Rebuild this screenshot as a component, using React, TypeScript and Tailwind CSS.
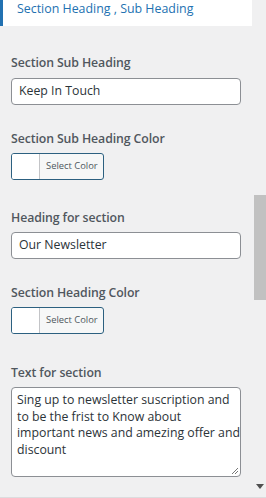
import React from 'react';

const font = { fontFamily: '"Open Sans", "Noto Sans", sans-serif' };

function Label({ children }: { children: React.ReactNode }) {
  return <div className="text-[12.3px] font-semibold leading-4 tracking-[-0.1px] text-[#50575e]">{children}</div>;
}

function TextInput({ value }: { value: string }) {
  return (
    <div className="flex h-[27px] w-[230px] items-center rounded-[4px] border border-[#8c8f94] bg-white px-[7px] text-[12.3px] text-[#2c3338]">
      {value}
    </div>
  );
}

function ColorButton() {
  return (
    <div className="flex h-[27px] w-[93px] overflow-hidden rounded-[3px] border border-[#2c6080] bg-[#f6f7f7]">
      <div className="w-[28px] border-r border-[#c3c4c7] bg-white" />
      <div className="flex flex-1 items-center pl-[6px] text-[9.4px] text-[#50575e]">Select Color</div>
    </div>
  );
}

const lines = [
  'Sing up to newsletter suscription and',
  'to be the frist to Know about',
  'important news and amezing offer and',
  'discount',
];

export default function App() {
  return (
    <div className="relative h-[498px] w-[266px] overflow-hidden bg-[#f0f0f1]" style={font}>
      <div className="flex h-[26px] w-[252px] items-end border-l-[3px] border-[#2271b1] bg-white pb-[9px] pl-[14px]">
        <span className="text-[12.4px] leading-4 text-[#2271b1]">Section Heading , Sub Heading</span>
      </div>

      <div className="flex flex-col pl-[11px] pt-[29px]">
        <Label>Section Sub Heading</Label>
        <div className="mt-[7px]">
          <TextInput value="Keep In Touch" />
        </div>

        <div className="mt-[26px]">
          <Label>Section Sub Heading Color</Label>
        </div>
        <div className="mt-[6px]">
          <ColorButton />
        </div>

        <div className="mt-[30px]">
          <Label>Heading for section</Label>
        </div>
        <div className="mt-[6px]">
          <TextInput value="Our Newsletter" />
        </div>

        <div className="mt-[26px]">
          <Label>Section Heading Color</Label>
        </div>
        <div className="mt-[6px]">
          <ColorButton />
        </div>

        <div className="mt-[31px]">
          <Label>Text for section</Label>
        </div>
        <div className="relative mt-[6px] h-[90px] w-[230px] rounded-[4px] border border-[#8c8f94] bg-white pl-[5px] pr-[2px] pt-[4px] text-[12.3px] leading-[16.7px] text-[#2c3338]">
          {lines.map((l) => (
            <div key={l} className="whitespace-nowrap">{l}</div>
          ))}
          <svg className="absolute bottom-[1px] right-[1px]" width="9" height="9" viewBox="0 0 9 9">
            <path d="M8 2 L2 8 M8 5 L5 8" stroke="#777" strokeWidth="1" />
          </svg>
        </div>
      </div>

      {/* scrollbar */}
      <div className="absolute right-0 top-[195px] h-[105px] w-[12px] bg-[#c1c1c1]" />
      <svg className="absolute bottom-[9px] right-[2px]" width="8" height="5" viewBox="0 0 8 5">
        <path d="M0 0 H8 L4 5 Z" fill="#505050" />
      </svg>
      <div className="absolute bottom-0 left-0 h-[1px] w-full bg-[#dcdcde]" />
    </div>
  );
}
